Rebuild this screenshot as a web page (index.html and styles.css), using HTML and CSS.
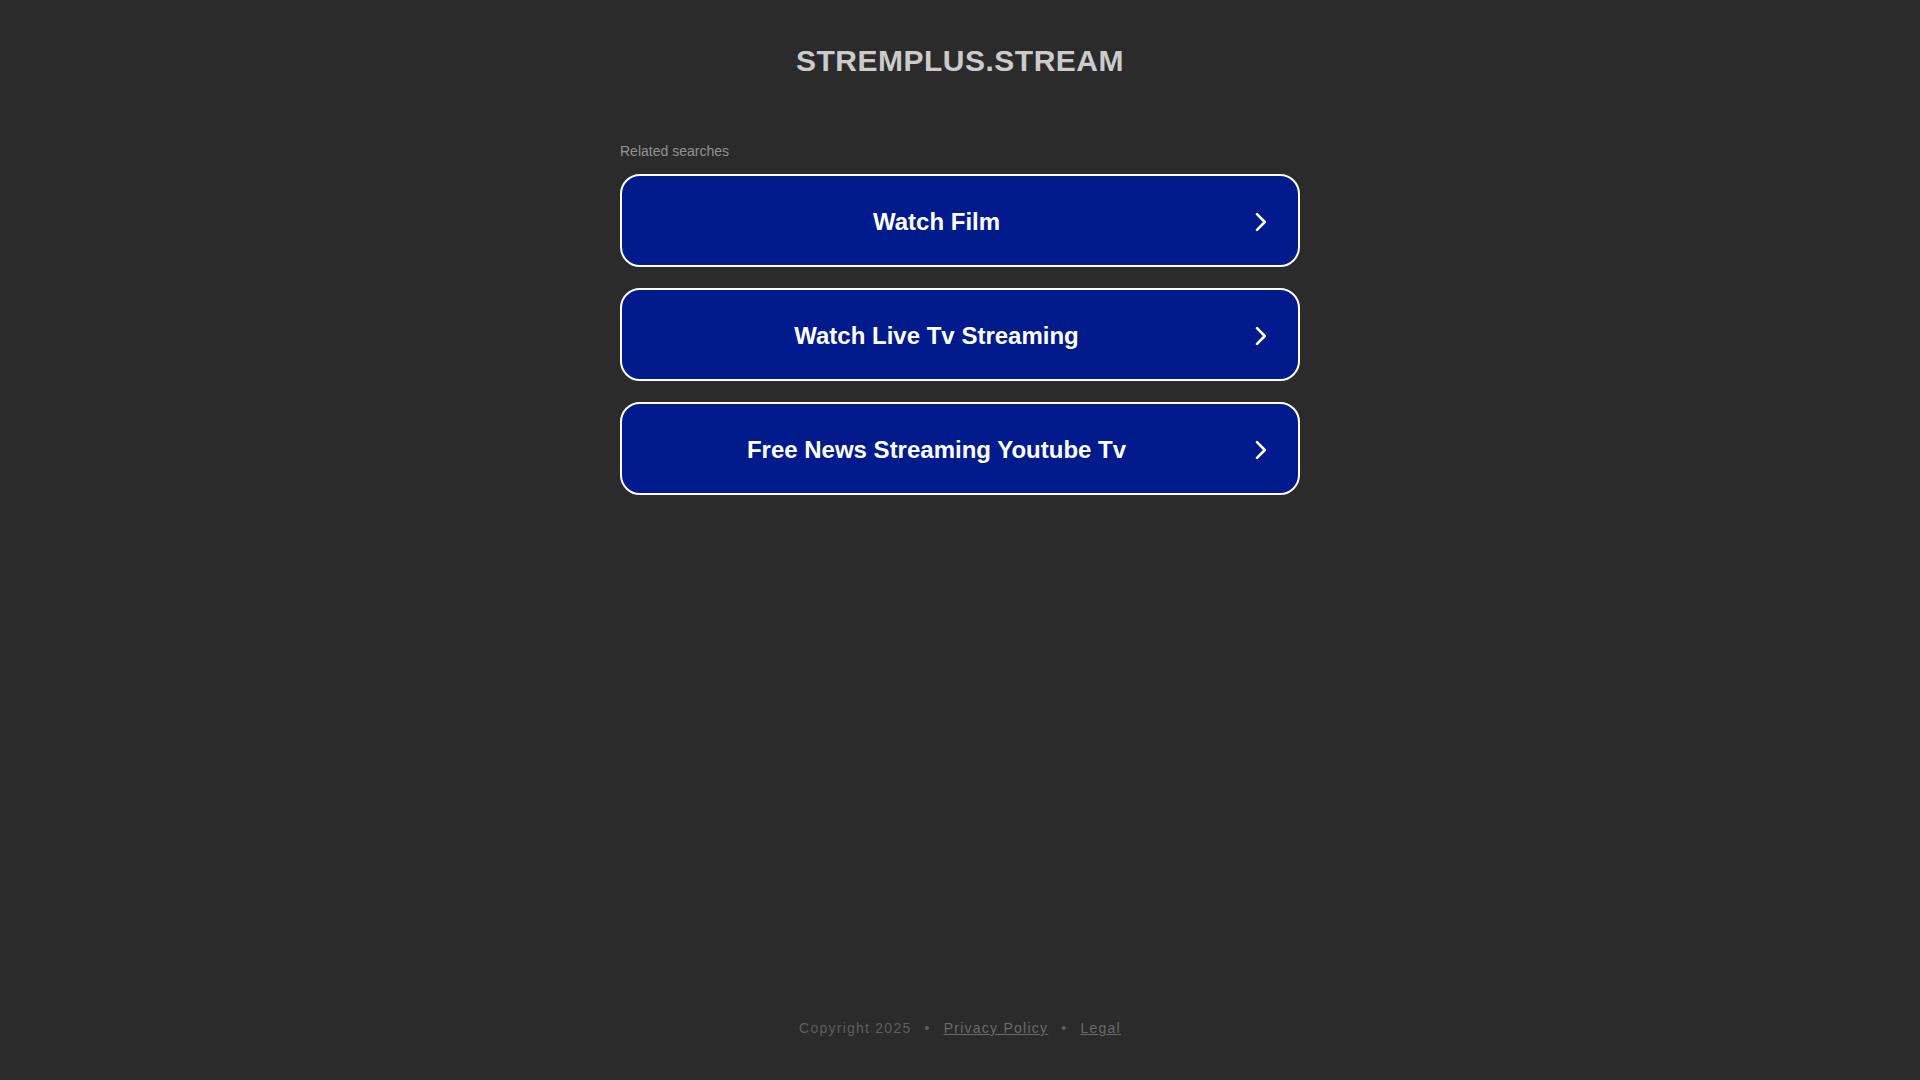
FILE: index.html
```html
<!DOCTYPE html>
<html lang="en">
<head>
<meta charset="utf-8">
<title>stremplus.stream</title>
<link rel="stylesheet" href="styles.css">
</head>
<body>
<div class="page">
  <header class="header">
    <h1 class="domain">STREMPLUS.STREAM</h1>
  </header>
  <main class="main">
    <div class="related">
      <p class="related-title">Related searches</p>
      <div class="links">
        <a class="link" href="#"><span class="link-text">Watch Film</span><svg class="chev" viewBox="0 0 12 20" width="12" height="20"><path d="M2 2.2 L9.8 10 L2 17.8" fill="none" stroke="#fff" stroke-width="2.6" stroke-linecap="round" stroke-linejoin="round"/></svg></a>
        <a class="link" href="#"><span class="link-text">Watch Live Tv Streaming</span><svg class="chev" viewBox="0 0 12 20" width="12" height="20"><path d="M2 2.2 L9.8 10 L2 17.8" fill="none" stroke="#fff" stroke-width="2.6" stroke-linecap="round" stroke-linejoin="round"/></svg></a>
        <a class="link" href="#"><span class="link-text">Free News Streaming Youtube Tv</span><svg class="chev" viewBox="0 0 12 20" width="12" height="20"><path d="M2 2.2 L9.8 10 L2 17.8" fill="none" stroke="#fff" stroke-width="2.6" stroke-linecap="round" stroke-linejoin="round"/></svg></a>
      </div>
    </div>
  </main>
  <footer class="footer">
    <span class="copy">Copyright 2025</span><span class="dot">•</span><a class="foot-link" href="#">Privacy Policy</a><span class="dot">•</span><a class="foot-link" href="#">Legal</a>
  </footer>
</div>
</body>
</html>
```

FILE: styles.css
```css
html, body {
  margin: 0;
  padding: 0;
  background: #2b2b2b;
}

body {
  font-family: "Liberation Sans", Arial, sans-serif;
}

.page {
  min-height: 100vh;
  display: flex;
  flex-direction: column;
}

.header {
  padding-top: 44px;
  text-align: center;
}

.domain {
  margin: 0;
  font-size: 30px;
  line-height: 34px;
  font-weight: bold;
  letter-spacing: 0.5px;
  color: #cbcbcb;
}

.main {
  flex: 1;
  display: flex;
  justify-content: center;
}

.related {
  width: 680px;
  margin-top: 65px;
}

.related-title {
  margin: 0 0 15px 0;
  font-size: 14px;
  line-height: 16px;
  color: #929292;
}

.links {
  display: flex;
  flex-direction: column;
  gap: 21px;
}

.link {
  box-sizing: border-box;
  height: 93px;
  display: flex;
  align-items: center;
  padding: 3px 31px 0 24px;
  background: #011a8c;
  border: 2px solid #ffffff;
  border-radius: 20px;
  text-decoration: none;
  color: #ffffff;
}

.link-text {
  flex: 1;
  text-align: center;
  font-size: 24px;
  font-weight: bold;
  line-height: 28px;
}

.chev {
  display: block;
  margin-left: 28px;
  flex: none;
}

.footer {
  padding-bottom: 44px;
  text-align: center;
  font-size: 14px;
  line-height: 16px;
  letter-spacing: 1.25px;
  color: #5f5f5f;
}

.dot {
  margin: 0 13px;
}

.foot-link {
  color: #6a6a6a;
  text-decoration: underline;
}
```
